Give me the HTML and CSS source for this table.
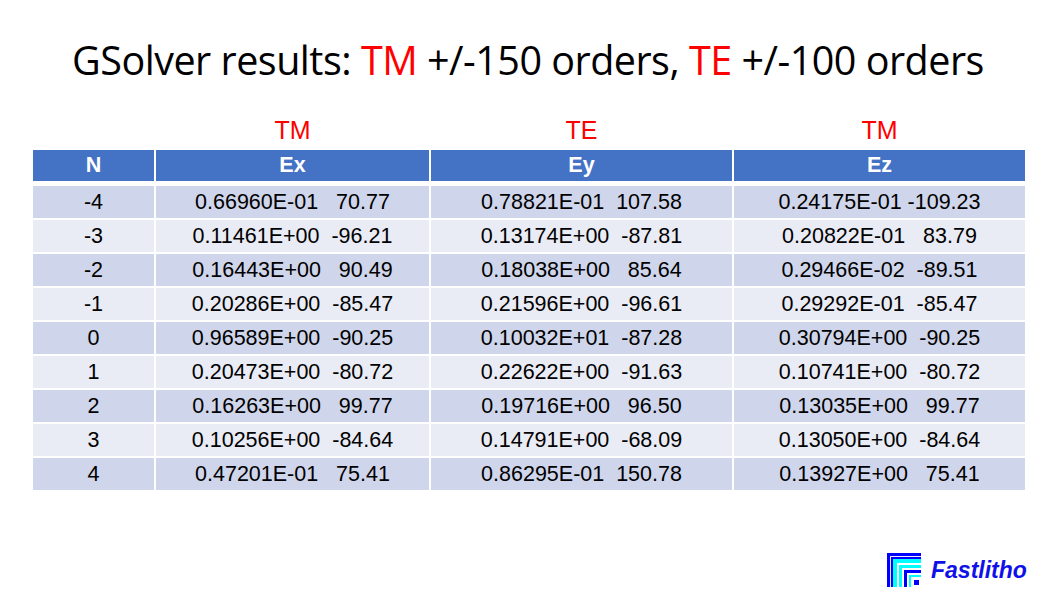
FILE: index.html
```html
<!DOCTYPE html>
<html>
<head>
<meta charset="utf-8">
<link rel="stylesheet" href="styles.css">
</head>
<body>
<div class="slide">
  <h1 class="title">GSolver results: <span class="red">TM</span> +/-150 orders, <span class="red">TE</span> +/-100 orders</h1>
  <div class="labels">
    <div></div>
    <div>TM</div>
    <div>TE</div>
    <div>TM</div>
  </div>
  <div class="table">
    <div class="head">
      <div class="hd">N</div><div class="hd">Ex</div><div class="hd">Ey</div><div class="hd">Ez</div>
    </div>
    <div class="body">
      <div class="c a">-4</div><div class="c a">0.66960E-01   70.77</div><div class="c a">0.78821E-01  107.58</div><div class="c a">0.24175E-01 -109.23</div>
      <div class="c b">-3</div><div class="c b">0.11461E+00  -96.21</div><div class="c b">0.13174E+00  -87.81</div><div class="c b">0.20822E-01   83.79</div>
      <div class="c a">-2</div><div class="c a">0.16443E+00   90.49</div><div class="c a">0.18038E+00   85.64</div><div class="c a">0.29466E-02  -89.51</div>
      <div class="c b">-1</div><div class="c b">0.20286E+00  -85.47</div><div class="c b">0.21596E+00  -96.61</div><div class="c b">0.29292E-01  -85.47</div>
      <div class="c a">0</div><div class="c a">0.96589E+00  -90.25</div><div class="c a">0.10032E+01  -87.28</div><div class="c a">0.30794E+00  -90.25</div>
      <div class="c b">1</div><div class="c b">0.20473E+00  -80.72</div><div class="c b">0.22622E+00  -91.63</div><div class="c b">0.10741E+00  -80.72</div>
      <div class="c a">2</div><div class="c a">0.16263E+00   99.77</div><div class="c a">0.19716E+00   96.50</div><div class="c a">0.13035E+00   99.77</div>
      <div class="c b">3</div><div class="c b">0.10256E+00  -84.64</div><div class="c b">0.14791E+00  -68.09</div><div class="c b">0.13050E+00  -84.64</div>
      <div class="c a">4</div><div class="c a">0.47201E-01   75.41</div><div class="c a">0.86295E-01  150.78</div><div class="c a">0.13927E+00   75.41</div>
    </div>
  </div>
  <div class="logo">
    <svg class="mark" width="34" height="34" viewBox="0 0 34 34">
      <rect x="0" y="0" width="34" height="34" fill="#0000ff"/>
      <rect x="3" y="3" width="31" height="31" fill="#e8e8ff"/>
      <rect x="4" y="4" width="30" height="30" fill="#0000ff"/>
      <rect x="6" y="6" width="28" height="28" fill="#00ffff"/>
      <rect x="10" y="10" width="24" height="24" fill="#ffffff"/>
      <rect x="12" y="12" width="22" height="22" fill="#00ffff"/>
      <rect x="15" y="15" width="19" height="19" fill="#ffffff"/>
      <rect x="17" y="17" width="17" height="17" fill="#0000ff"/>
      <rect x="20" y="20" width="14" height="14" fill="#ffffff"/>
      <rect x="22" y="22" width="12" height="12" fill="#00ffff"/>
      <rect x="24" y="24" width="10" height="10" fill="#ffffff"/>
      <rect x="27" y="27" width="5" height="5" fill="#0000ff"/>
    </svg>
    <span class="brand">Fastlitho</span>
  </div>
</div>
</body>
</html>
```
FILE: styles.css
```css
html, body {
  margin: 0;
  padding: 0;
  background: #ffffff;
}
.slide {
  width: 1056px;
  height: 593px;
  position: relative;
  overflow: hidden;
  font-family: "Liberation Sans", Arial, sans-serif;
}
.title {
  margin: 0;
  padding-top: 36px;
  height: 48px;
  line-height: 48px;
  text-align: center;
  font-family: "Open Sans", sans-serif;
  font-weight: 400;
  font-size: 39.5px;
  color: #000000;
  letter-spacing: -0.5px;
}
.red { color: #ff0000; }
.labels {
  margin: 32px 0 0 33px;
  display: grid;
  grid-template-columns: 121px 273px 301px 291px;
  column-gap: 2px;
  height: 28px;
  line-height: 28px;
  font-size: 25px;
  color: #ff0000;
  text-align: center;
}
.table {
  margin: 6px 0 0 33px;
  width: 992px;
  font-size: 21.5px;
}
.head, .body {
  display: grid;
  grid-template-columns: 121px 273px 301px 291px;
  column-gap: 2px;
}
.head {
  height: 31px;
  margin-bottom: 5px;
}
.body {
  grid-auto-rows: 32px;
  row-gap: 2px;
}
.hd {
  background: #4472c4;
  color: #ffffff;
  font-weight: bold;
  text-align: center;
  line-height: 31px;
}
.c {
  text-align: center;
  line-height: 32px;
  white-space: pre;
  color: #000000;
}
.a { background: #cfd5ea; }
.b { background: #e9ebf5; }
.logo {
  position: absolute;
  left: 887px;
  top: 553px;
  display: flex;
  align-items: center;
  gap: 10px;
}
.mark { display: block; }
.brand {
  font-family: "Liberation Sans", Arial, sans-serif;
  font-weight: bold;
  font-style: italic;
  font-size: 23px;
  color: #1010e8;
}
```
